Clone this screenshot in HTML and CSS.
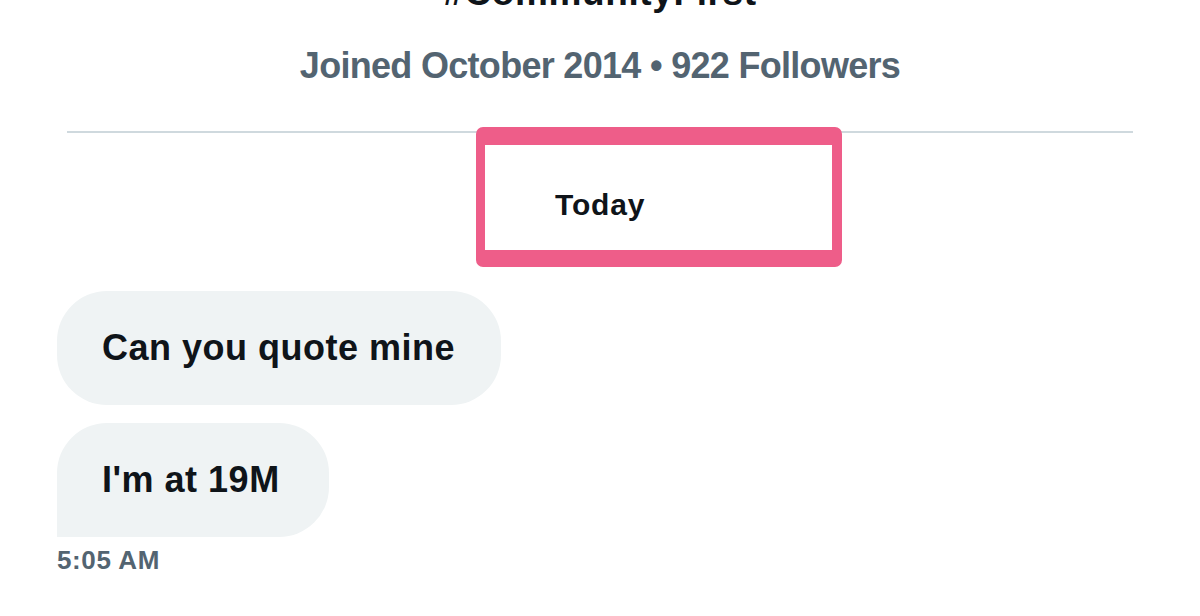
FILE: index.html
```html
<!DOCTYPE html>
<html lang="en">
<head>
<meta charset="utf-8">
<title>Conversation</title>
<link rel="stylesheet" href="styles.css">
</head>
<body>
<main class="page">
  <header class="profile">
    <h1 class="profile-tag">#CommunityFirst</h1>
    <p class="profile-meta">Joined October 2014 • 922 Followers</p>
  </header>
  <div class="divider"></div>
  <div class="day-marker">
    <span class="day-label">Today</span>
  </div>
  <section class="messages">
    <div class="bubble bubble-first">Can you quote mine</div>
    <div class="bubble bubble-last">I'm at 19M</div>
    <div class="timestamp">5:05 AM</div>
  </section>
</main>
</body>
</html>
```
FILE: styles.css
```css
html, body {
  margin: 0;
  padding: 0;
  background: #ffffff;
}

body {
  font-family: "Liberation Sans", Arial, sans-serif;
  color: #0f1419;
  overflow: hidden;
  height: 616px;
}

.page {
  display: flex;
  flex-direction: column;
}

.profile {
  display: flex;
  flex-direction: column;
  align-items: center;
}

.profile-tag {
  margin: -27px 0 0 0;
  font-size: 37px;
  line-height: 40px;
  font-weight: 700;
  letter-spacing: 0.6px;
  color: #0f1419;
}

.profile-meta {
  margin: 31px 0 0 0;
  font-size: 36px;
  line-height: 44px;
  font-weight: 700;
  letter-spacing: -0.7px;
  color: #536471;
}

.divider {
  margin: 43px 67px 0 67px;
  height: 2px;
  background: #cfd9de;
}

.day-marker {
  box-sizing: border-box;
  margin: -6px 0 0 476px;
  width: 366px;
  height: 140px;
  border-style: solid;
  border-width: 18px 10px 17px 9px;
  border-color: #ee5d89;
  border-radius: 7px;
  background: #ffffff;
  padding: 42px 0 0 70px;
}

.day-label {
  display: block;
  font-size: 30px;
  line-height: 36px;
  font-weight: 700;
  letter-spacing: 0.8px;
  color: #0f1419;
}

.messages {
  display: flex;
  flex-direction: column;
  align-items: flex-start;
  padding: 24px 0 0 57px;
}

.bubble {
  box-sizing: border-box;
  height: 114px;
  background: #eff3f4;
  font-size: 36px;
  line-height: 42px;
  font-weight: 700;
  letter-spacing: 0.5px;
  color: #0f1419;
  padding: 36px 46px 0 45px;
  border-radius: 50px;
  white-space: nowrap;
}

.bubble-last {
  margin-top: 18px;
  padding-right: 49px;
  border-bottom-left-radius: 0;
}

.timestamp {
  margin-top: 8px;
  font-size: 26px;
  line-height: 30px;
  font-weight: 700;
  letter-spacing: 0.6px;
  color: #536471;
}
```
